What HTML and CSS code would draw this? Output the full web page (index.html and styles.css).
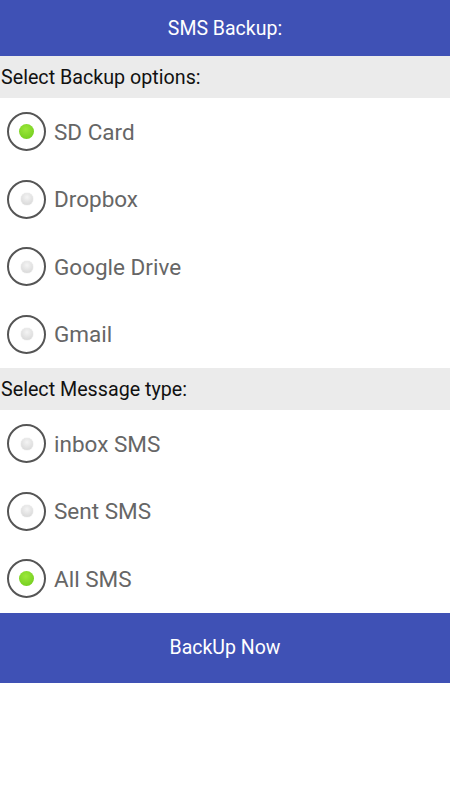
FILE: index.html
```html
<!DOCTYPE html>
<html lang="en">
<head>
    <meta charset="UTF-8">
    <meta name="viewport" content="width=device-width, initial-scale=1.0">
    <title>SMS Backup</title>
    <link rel="stylesheet" href="styles.css">
</head>
<body>
    <div class="app">
        <header class="toolbar">SMS Backup:</header>

        <div class="section-title">Select Backup options:</div>
        <div class="radio-group">
            <label class="radio-row">
                <input type="radio" name="target" checked>
                <span class="radio"></span>
                <span class="radio-label">SD Card</span>
            </label>
            <label class="radio-row">
                <input type="radio" name="target">
                <span class="radio"></span>
                <span class="radio-label">Dropbox</span>
            </label>
            <label class="radio-row">
                <input type="radio" name="target">
                <span class="radio"></span>
                <span class="radio-label">Google Drive</span>
            </label>
            <label class="radio-row">
                <input type="radio" name="target">
                <span class="radio"></span>
                <span class="radio-label">Gmail</span>
            </label>
        </div>

        <div class="section-title">Select Message type:</div>
        <div class="radio-group">
            <label class="radio-row">
                <input type="radio" name="type">
                <span class="radio"></span>
                <span class="radio-label">inbox SMS</span>
            </label>
            <label class="radio-row">
                <input type="radio" name="type">
                <span class="radio"></span>
                <span class="radio-label">Sent SMS</span>
            </label>
            <label class="radio-row">
                <input type="radio" name="type" checked>
                <span class="radio"></span>
                <span class="radio-label">All SMS</span>
            </label>
        </div>

        <button class="backup-btn">BackUp Now</button>
    </div>
</body>
</html>
```

FILE: styles.css
```css
body {
    margin: 0;
    padding: 0;
    background-color: #fff;
    font-family: Roboto, "Noto Sans", sans-serif;
}

.app {
    width: 450px;
}

.toolbar {
    height: 56px;
    display: flex;
    align-items: center;
    justify-content: center;
    background-color: #3f51b5;
    color: #fff;
    font-size: 19.5px;
}

.section-title {
    height: 42px;
    display: flex;
    align-items: center;
    padding-left: 1px;
    background-color: #ebebeb;
    color: #111;
    font-size: 19.7px;
}

.radio-group {
    display: flex;
    flex-direction: column;
}

.radio-row {
    height: 67.5px;
    display: flex;
    align-items: center;
    padding-left: 7px;
    cursor: pointer;
}

.radio-row input {
    display: none;
}

.radio {
    width: 35px;
    height: 35px;
    border: 2px solid #555;
    border-radius: 50%;
    display: flex;
    align-items: center;
    justify-content: center;
    flex-shrink: 0;
}

.radio::after {
    content: "";
    width: 12px;
    height: 12px;
    border-radius: 50%;
    background: radial-gradient(circle at 50% 35%, #f4f4f4, #d2d2d2);
    box-shadow: 0 0 1px rgba(0, 0, 0, 0.3);
}

.radio-row input:checked + .radio::after {
    width: 15px;
    height: 15px;
    background: radial-gradient(circle at 45% 35%, #9ce83a, #6bc81a);
    box-shadow: none;
}

.radio-label {
    margin-left: 8px;
    color: #666;
    font-size: 22.5px;
}

.backup-btn {
    display: flex;
    align-items: center;
    justify-content: center;
    width: 100%;
    height: 70px;
    border: none;
    background-color: #3f51b5;
    color: #fff;
    font-family: Roboto, "Noto Sans", sans-serif;
    font-size: 19.5px;
    cursor: pointer;
}
```
